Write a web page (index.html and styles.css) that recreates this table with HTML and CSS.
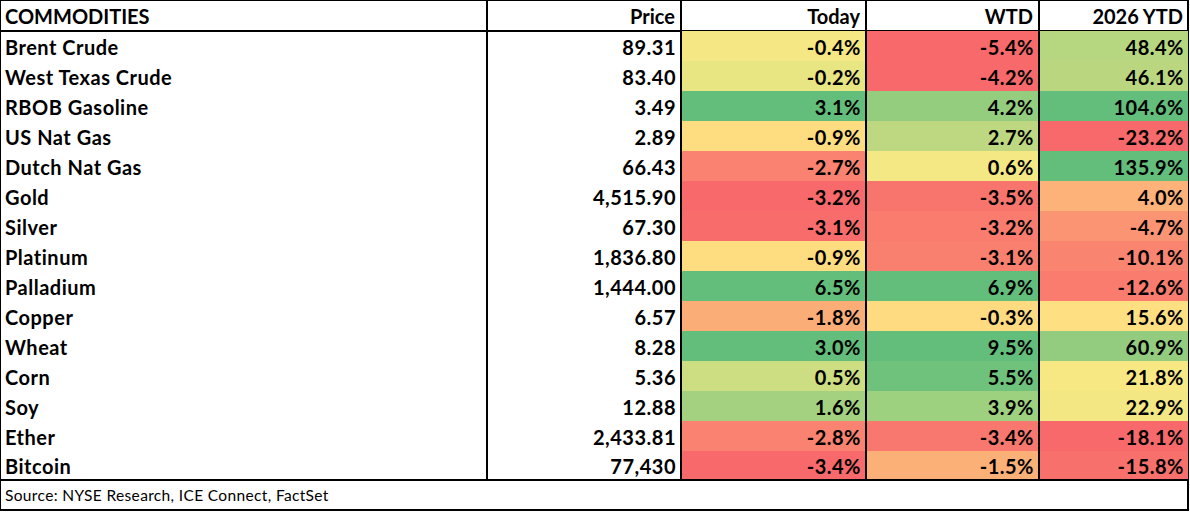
FILE: index.html
```html
<!DOCTYPE html>
<html lang="en">
<head>
<meta charset="utf-8">
<title>Commodities</title>
<link rel="stylesheet" href="styles.css">
</head>
<body>
<div class="sheet">
  <div class="cell head name">COMMODITIES</div>
  <div class="cell head num">Price</div>
  <div class="cell head num">Today</div>
  <div class="cell head num">WTD</div>
  <div class="cell head num">2026 YTD</div>

  <div class="cell name">Brent Crude</div>
  <div class="cell num">89.31</div>
  <div class="cell num" style="background:#F5E884">-0.4%</div>
  <div class="cell num" style="background:#F8696B">-5.4%</div>
  <div class="cell num" style="background:#B6D680">48.4%</div>

  <div class="cell name">West Texas Crude</div>
  <div class="cell num">83.40</div>
  <div class="cell num" style="background:#E8E583">-0.2%</div>
  <div class="cell num" style="background:#F8696B">-4.2%</div>
  <div class="cell num" style="background:#BAD780">46.1%</div>

  <div class="cell name">RBOB Gasoline</div>
  <div class="cell num">3.49</div>
  <div class="cell num" style="background:#63BE7B">3.1%</div>
  <div class="cell num" style="background:#94CD7E">4.2%</div>
  <div class="cell num" style="background:#63BE7B">104.6%</div>

  <div class="cell name">US Nat Gas</div>
  <div class="cell num">2.89</div>
  <div class="cell num" style="background:#FEDD81">-0.9%</div>
  <div class="cell num" style="background:#BDD881">2.7%</div>
  <div class="cell num" style="background:#F8696B">-23.2%</div>

  <div class="cell name">Dutch Nat Gas</div>
  <div class="cell num">66.43</div>
  <div class="cell num" style="background:#F98370">-2.7%</div>
  <div class="cell num" style="background:#F3E884">0.6%</div>
  <div class="cell num" style="background:#63BE7B">135.9%</div>

  <div class="cell name">Gold</div>
  <div class="cell num">4,515.90</div>
  <div class="cell num" style="background:#F8696B">-3.2%</div>
  <div class="cell num" style="background:#F8756E">-3.5%</div>
  <div class="cell num" style="background:#FCB279">4.0%</div>

  <div class="cell name">Silver</div>
  <div class="cell num">67.30</div>
  <div class="cell num" style="background:#F86D6C">-3.1%</div>
  <div class="cell num" style="background:#F97C6F">-3.2%</div>
  <div class="cell num" style="background:#FA9473">-4.7%</div>

  <div class="cell name">Platinum</div>
  <div class="cell num">1,836.80</div>
  <div class="cell num" style="background:#FEDD81">-0.9%</div>
  <div class="cell num" style="background:#F97F6F">-3.1%</div>
  <div class="cell num" style="background:#F98470">-10.1%</div>

  <div class="cell name">Palladium</div>
  <div class="cell num">1,444.00</div>
  <div class="cell num" style="background:#63BE7B">6.5%</div>
  <div class="cell num" style="background:#63BE7B">6.9%</div>
  <div class="cell num" style="background:#F97C6F">-12.6%</div>

  <div class="cell name">Copper</div>
  <div class="cell num">6.57</div>
  <div class="cell num" style="background:#FBAD77">-1.8%</div>
  <div class="cell num" style="background:#FEDB81">-0.3%</div>
  <div class="cell num" style="background:#FEDF82">15.6%</div>

  <div class="cell name">Wheat</div>
  <div class="cell num">8.28</div>
  <div class="cell num" style="background:#64BE7B">3.0%</div>
  <div class="cell num" style="background:#63BE7B">9.5%</div>
  <div class="cell num" style="background:#93CC7E">60.9%</div>

  <div class="cell name">Corn</div>
  <div class="cell num">5.36</div>
  <div class="cell num" style="background:#CCDD82">0.5%</div>
  <div class="cell num" style="background:#6FC27C">5.5%</div>
  <div class="cell num" style="background:#F7E884">21.8%</div>

  <div class="cell name">Soy</div>
  <div class="cell num">12.88</div>
  <div class="cell num" style="background:#A3D17F">1.6%</div>
  <div class="cell num" style="background:#9DD07F">3.9%</div>
  <div class="cell num" style="background:#F3E783">22.9%</div>

  <div class="cell name">Ether</div>
  <div class="cell num">2,433.81</div>
  <div class="cell num" style="background:#F98270">-2.8%</div>
  <div class="cell num" style="background:#F8776E">-3.4%</div>
  <div class="cell num" style="background:#F8696B">-18.1%</div>

  <div class="cell name last">Bitcoin</div>
  <div class="cell num last">77,430</div>
  <div class="cell num last" style="background:#F8696B">-3.4%</div>
  <div class="cell num last" style="background:#FBB078">-1.5%</div>
  <div class="cell num last" style="background:#F8706C">-15.8%</div>

  <div class="source">Source: NYSE Research, ICE Connect, FactSet</div>
</div>
</body>
</html>
```

FILE: styles.css
```css
html, body {
  margin: 0;
  padding: 0;
  background: #ffffff;
}

.sheet {
  width: 1189px;
  box-sizing: border-box;
  display: grid;
  grid-template-columns: 487px 194px 185px 173px 148px;
  grid-auto-rows: 30px;
  border-left: 1px solid #000;
  border-top: 1px solid #000;
  border-right: 2px solid #000;
  font-family: "Lato", "Liberation Sans", sans-serif;
  color: #000;
}

.cell {
  box-sizing: border-box;
  font-weight: 700;
  font-size: 20px;
  letter-spacing: 0.5px;
  display: flex;
  align-items: center;
  padding: 1px 4px 0 4px;
  border-right: 2px solid #000;
  white-space: nowrap;
}

.cell:nth-child(5n) {
  border-right: none;
}

.head {
  height: 31px;
  letter-spacing: 0;
  padding: 0 5px 0 4px;
  border-bottom: 2px solid #000;
}

.num {
  justify-content: flex-end;
}

.last {
  border-bottom: 2px solid #000;
}

.source {
  grid-column: 1 / -1;
  box-sizing: border-box;
  height: 30px;
  display: flex;
  align-items: center;
  padding: 0 4px;
  font-size: 15.5px;
  letter-spacing: 0.35px;
  font-weight: 400;
  border-bottom: 2px solid #000;
}
```
